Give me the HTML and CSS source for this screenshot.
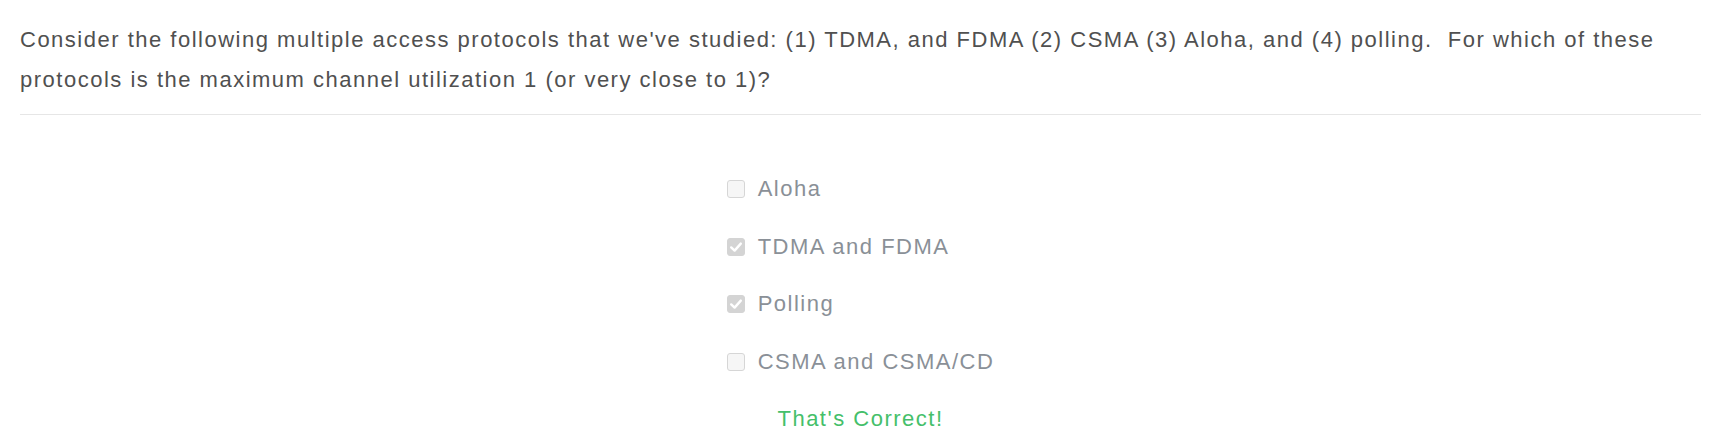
FILE: index.html
```html
<!DOCTYPE html>
<html lang="en">
<head>
<meta charset="utf-8">
<title>Quiz question</title>
<link rel="stylesheet" href="styles.css">
</head>
<body>
<div class="quiz">
  <p class="question">Consider the following multiple access protocols that we've studied: (1) TDMA, and FDMA (2) CSMA (3) Aloha, and (4) polling.&nbsp; For which of these protocols is the maximum channel utilization 1 (or very close to 1)?</p>
  <hr class="divider">
  <div class="answers">
    <ul class="options">
      <li class="option"><span class="box"></span><span class="label">Aloha</span></li>
      <li class="option"><span class="box checked"><svg viewBox="0 0 18 18" width="18" height="18"><path d="M4.2 9.4 L7.6 12.6 L13.8 5.6" fill="none" stroke="#fff" stroke-width="2.4" stroke-linecap="round" stroke-linejoin="round"/></svg></span><span class="label">TDMA and FDMA</span></li>
      <li class="option"><span class="box checked"><svg viewBox="0 0 18 18" width="18" height="18"><path d="M4.2 9.4 L7.6 12.6 L13.8 5.6" fill="none" stroke="#fff" stroke-width="2.4" stroke-linecap="round" stroke-linejoin="round"/></svg></span><span class="label">Polling</span></li>
      <li class="option"><span class="box"></span><span class="label">CSMA and CSMA/CD</span></li>
    </ul>
    <p class="feedback">That's Correct!</p>
  </div>
</div>
</body>
</html>
```

FILE: styles.css
```css
html, body {
  margin: 0;
  padding: 0;
  background: #ffffff;
}

body {
  font-family: "Liberation Sans", Arial, sans-serif;
  font-size: 22px;
}

.quiz {
  padding: 20px 30px 0 20px;
}

.question {
  margin: 0;
  color: #505050;
  line-height: 40px;
  letter-spacing: 1.5px;
}

.divider {
  margin: 14px 0 0 0;
  border: 0;
  border-top: 1px solid #e6e6e6;
  height: 0;
}

.answers {
  display: flex;
  flex-direction: column;
  align-items: center;
  padding-top: 59px;
  letter-spacing: 1.5px;
}

.options {
  list-style: none;
  margin: 0;
  padding: 0;
  display: flex;
  flex-direction: column;
  gap: 27.5px;
}

.option {
  display: flex;
  align-items: center;
  height: 30px;
  color: #8a9097;
}

.box {
  width: 18px;
  height: 18px;
  box-sizing: border-box;
  border: 1px solid #d6d6d6;
  border-radius: 3px;
  background: #f6f6f6;
  margin-right: 13px;
  display: flex;
  align-items: center;
  justify-content: center;
  flex: none;
}

.box.checked {
  border-color: #d4d4d4;
  background: #d4d4d4;
}

.box svg {
  display: block;
  margin: -1px;
}

.feedback {
  margin: 27.5px 0 0 0;
  height: 30px;
  line-height: 30px;
  color: #45bf6a;
}
```
